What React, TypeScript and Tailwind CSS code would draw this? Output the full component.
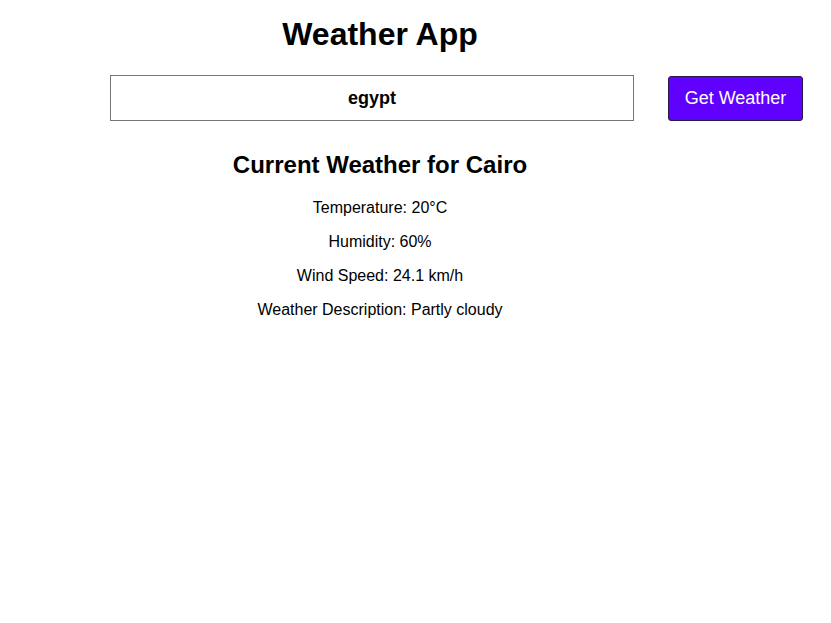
import { useState } from "react";

export default function App() {
  const [city, setCity] = useState("egypt");

  // static weather data shown in the screenshot
  const weather = {
    name: "Cairo",
    temp: 20,
    humidity: 60,
    wind: 24.1,
    desc: "Partly cloudy",
  };

  return (
    <div className="min-h-screen bg-white font-['Liberation_Sans',Arial,sans-serif] text-black">
      <div className="ml-[110px] w-[540px] pt-4 text-center">
        <h1 className="text-[32px] font-bold leading-[37px]">Weather App</h1>

        <div className="mt-[22px] flex items-center">
          <input
            className="h-[46px] w-[524px] shrink-0 border border-[#767676] px-2 text-center text-lg font-bold outline-none"
            value={city}
            onChange={(e) => setCity(e.target.value)}
          />
          <button className="ml-[34px] h-[45px] w-[135px] shrink-0 rounded-[3px] border border-[#2a1a4a] bg-[#6000ff] text-lg text-white">
            Get Weather
          </button>
        </div>

        <h2 className="mt-[30px] text-2xl font-bold leading-[28px]">
          Current Weather for {weather.name}
        </h2>
        <div className="mt-5 flex flex-col gap-4 text-base leading-[18px]">
          <p>Temperature: {weather.temp}°C</p>
          <p>Humidity: {weather.humidity}%</p>
          <p>Wind Speed: {weather.wind} km/h</p>
          <p>Weather Description: {weather.desc}</p>
        </div>
      </div>
    </div>
  );
}
